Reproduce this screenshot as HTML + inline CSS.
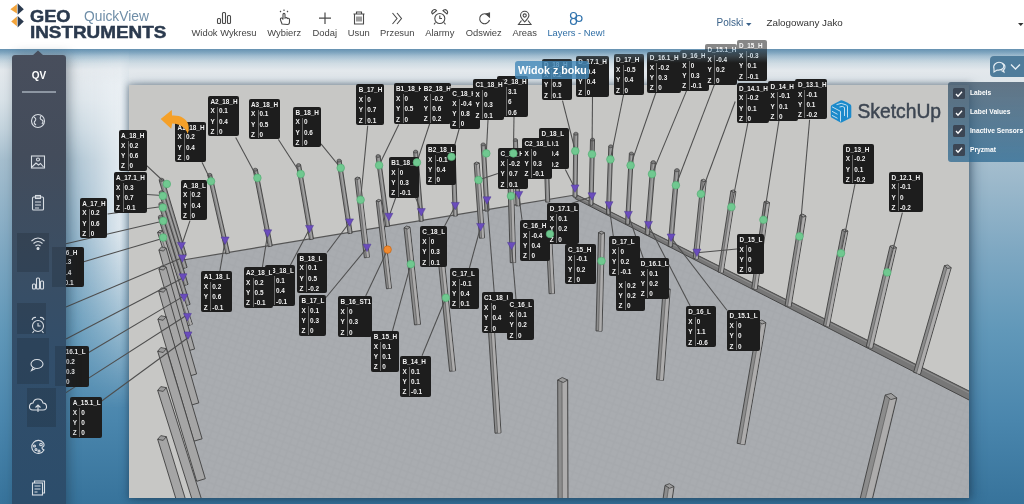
<!DOCTYPE html><html><head><meta charset="utf-8"><style>
*{margin:0;padding:0;box-sizing:border-box}
html,body{width:1024px;height:504px;overflow:hidden;background:#fff;font-family:"Liberation Sans",sans-serif}
#bg{position:absolute;left:0;top:49px;width:1024px;height:455px;background:linear-gradient(180deg,#7aa0bb 0px,#c5d5df 11px,#e3e8ec 21px,#d9e2e8 50px,#c3d3dd 80px,#a5bece 111px,#7fa8c2 201px,#6198b9 281px,#4a86ad 371px,#37739b 455px)}
#vp{position:absolute;left:129px;top:85px;width:840px;height:413px;background:#c7c7c5;overflow:hidden;box-shadow:0 0 6px 1px rgba(30,50,70,.4),4px 2px 12px rgba(20,45,70,.35)}
#glow{position:absolute;left:66px;top:49px;width:63px;height:360px;background:linear-gradient(90deg,rgba(236,241,245,0) 0%,rgba(236,241,245,.45) 45%,rgba(236,241,245,.85) 85%,rgba(215,225,232,.7) 100%);-webkit-mask-image:linear-gradient(180deg,transparent 0%,#000 10%,#000 50%,transparent 100%)}
#scene{position:absolute;left:0;top:0}
.lb{position:absolute;height:40.8px;background:#1d1d1d;border-radius:2px;color:#f0f0f0;font-size:6.4px;font-weight:bold;line-height:8px;white-space:nowrap;overflow:hidden}
.lb::after{content:"";position:absolute;left:9px;top:11px;bottom:1px;width:1px;background:#6a6a6a}
.lb b{position:absolute;left:2.5px;top:2px}
.lb i{position:absolute;font-style:normal}
.lb .k{left:2.5px}
.lb .v{left:11px}
#hdr{position:absolute;left:0;top:0;width:1024px;height:49px;background:#fff}
.nav{position:absolute;top:26.5px;font-size:9.4px;color:#444;white-space:nowrap}
#side{position:absolute;left:12px;top:55px;width:54px;height:460px;border-radius:3px;box-shadow:3px 0 12px rgba(25,40,55,.4);
 background:linear-gradient(180deg,#484e5c 0px,#434c5b 100px,#3b4e63 200px,#324e6a 300px,#2c4d6b 449px)}
</style></head><body><div id="root" style="position:absolute;left:0;top:0;width:1024px;height:504px;overflow:hidden;will-change:transform">
<div id="hdr">
 <div style="position:absolute;left:30px;font-weight:bold;font-size:16px;color:#2b3a4e;transform:scaleX(1.14);top:7.5px;-webkit-text-stroke:0.5px #2b3a4e;transform-origin:0 0">GEO</div>
 <div style="position:absolute;left:30px;top:22.5px;font-weight:bold;font-size:17px;color:#2b3a4e;transform:scaleX(1.11);-webkit-text-stroke:0.5px #2b3a4e;transform-origin:0 0">INSTRUMENTS</div>
 <div style="position:absolute;left:84px;top:8.5px;font-size:13.8px;color:#6f8ea8">QuickView</div>
 <svg width="30" height="30" style="position:absolute;left:0;top:0">
<polygon points="10.4,9.2 16.9,4.2 16.9,13.6" fill="#f3a43b"/><polygon points="17.6,3.3 23.8,9.2 17.6,14.8" fill="#2b3a4e"/>
<polygon points="11.2,21.4 16.9,16.6 16.9,26.2" fill="#f3a43b"/><polygon points="17.6,16 23.8,21.4 17.6,27.4" fill="#2b3a4e"/>
</svg><div class="nav" style="left:164px;width:120px;text-align:center;color:#444">Widok Wykresu</div><div class="nav" style="left:224.2px;width:120px;text-align:center;color:#444">Wybierz</div><div class="nav" style="left:264.8px;width:120px;text-align:center;color:#444">Dodaj</div><div class="nav" style="left:298.8px;width:120px;text-align:center;color:#444">Usun</div><div class="nav" style="left:337.3px;width:120px;text-align:center;color:#444">Przesun</div><div class="nav" style="left:379.8px;width:120px;text-align:center;color:#444">Alarmy</div><div class="nav" style="left:423.7px;width:120px;text-align:center;color:#444">Odswiez</div><div class="nav" style="left:464.70000000000005px;width:120px;text-align:center;color:#444">Areas</div><div class="nav" style="left:516.3px;width:120px;text-align:center;color:#2f6ea5">Layers - New!</div><svg width="1024" height="49" style="position:absolute;left:0;top:0">
<g fill="none" stroke="#4a4a4a" stroke-width="1.1">
 <rect x="217.5" y="18.5" width="3" height="5" rx="1"/><rect x="222.5" y="12.5" width="3" height="11" rx="1"/><rect x="227.5" y="15.5" width="3" height="8" rx="1"/>
 <path d="M282,24 C281,21 280,20 280.5,18.5 C281,17.5 282.5,18 283,19.5 L283,14.5 C283,13 285,13 285,14.5 L285,18 C286,17.5 287,17.5 287.5,18.5 C288.5,18 289.5,18.5 289.5,19.5 L289.5,22 C289.5,23.5 288.5,24.5 287.5,24.5 Z"/>
 <path d="M281,12 l-1,-1 M284,11 l0,-1.5 M287,12 l1,-1" />
 <path d="M325,12.5 V24 M319,18.2 H331" stroke-width="1.2"/>
 <path d="M353.5,14 H364.5 M356.5,14 V12 H361.5 V14 M354.5,14 V24 H363.5 V14 M357,16.5 V21.5 M359,16.5 V21.5 M361,16.5 V21.5"/>
 <path d="M392.5,13 L397,18.5 L392.5,24 M397,13 L401.5,18.5 L397,24"/>
 <circle cx="439.8" cy="18.5" r="5"/><path d="M439.8,15.5 V18.5 H442 M435.5,22.5 l-1.5,1.8 M444,22.5 l1.5,1.8"/>
 <path d="M432.5,14 A2.6,2.6 0 0,1 436.5,10.6 Z M447,14 A2.6,2.6 0 0,0 443,10.6 Z"/>
 <path d="M488.5,15.5 A5,5 0 1,0 489.5,20"/><path d="M486,14 L489.5,13 L489.5,17 Z" fill="#4a4a4a"/>
 <path d="M524.7,22 C521,18 520.5,16.5 520.5,15.5 A4.2,4.2 0 1,1 528.9,15.5 C528.9,16.5 528.4,18 524.7,22 Z"/><circle cx="524.7" cy="15.5" r="1.6"/>
 <path d="M521.5,20.5 L518.5,24.5 H531 L528,20.5"/>
</g>
<g fill="none" stroke="#2f72ad" stroke-width="1.2">
 <circle cx="573.5" cy="15.5" r="3"/><circle cx="579" cy="18.5" r="3"/><circle cx="573.5" cy="21.5" r="3"/>
</g>
</svg>
 <div style="position:absolute;left:716.5px;top:17.3px;font-size:10px;color:#3b6289">Polski</div>
 <svg width="8" height="5" style="position:absolute;left:745px;top:22px"><path d="M1,1 h5.5 l-2.75,3z" fill="#3b6289"/></svg>
 <div style="position:absolute;left:766.5px;top:17px;font-size:9.8px;color:#333">Zalogowany Jako</div>
 <svg width="8" height="5" style="position:absolute;left:1017px;top:22px"><path d="M1,1 h5.5 l-2.75,3z" fill="#333"/></svg>
</div>
<div id="bg"></div>
<div id="glow"></div><div id="vp"></div>
<svg id="scene" width="1024" height="504" style="position:absolute;left:0;top:0"><defs><clipPath id="vc"><rect x="129" y="85" width="840" height="413"/></clipPath><pattern id="tx" width="10" height="10" patternUnits="userSpaceOnUse" patternTransform="rotate(-25)"><rect width="10" height="10" fill="#a9acb0"/><path d="M0,0 L10,10 M10,0 L0,10" stroke="#a6a9ad" stroke-width="1.4"/></pattern></defs><g clip-path="url(#vc)"><polygon points="183,260 575,195 969,396 969,498 198,498 170,330" fill="url(#tx)"/><line x1="183" y1="260" x2="575" y2="195" stroke="#555" stroke-width="1.2"/><polygon points="207.8,175.2 225.8,253.9 229.6,253.1 211.6,174.4" fill="#888888" stroke="#3e3e3e" stroke-width="0.9"/><line x1="210.1" y1="174.7" x2="228.1" y2="253.4" stroke="#acacac" stroke-width="0.9"/><ellipse cx="209.7" cy="174.8" rx="2.0" ry="1.5" fill="#7a7a7a" stroke="#3e3e3e" stroke-width="0.6"/><polygon points="253.3,170.1 268.3,246.7 272.3,245.9 257.3,169.3" fill="#888888" stroke="#3e3e3e" stroke-width="0.9"/><line x1="255.7" y1="169.6" x2="270.7" y2="246.2" stroke="#acacac" stroke-width="0.9"/><ellipse cx="255.3" cy="169.7" rx="2.0" ry="1.5" fill="#7a7a7a" stroke="#3e3e3e" stroke-width="0.6"/><polygon points="296.6,165.3 309.5,239.6 313.5,239.0 300.6,164.7" fill="#888888" stroke="#3e3e3e" stroke-width="0.9"/><line x1="299.0" y1="164.9" x2="311.9" y2="239.2" stroke="#acacac" stroke-width="0.9"/><ellipse cx="298.6" cy="165.0" rx="2.0" ry="1.5" fill="#7a7a7a" stroke="#3e3e3e" stroke-width="0.6"/><polygon points="337.1,160.9 348.2,233.7 352.2,233.1 341.1,160.3" fill="#888888" stroke="#3e3e3e" stroke-width="0.9"/><line x1="339.5" y1="160.5" x2="350.6" y2="233.3" stroke="#acacac" stroke-width="0.9"/><ellipse cx="339.1" cy="160.6" rx="2.0" ry="1.5" fill="#7a7a7a" stroke="#3e3e3e" stroke-width="0.6"/><polygon points="376.1,156.3 385.6,226.7 389.6,226.1 380.1,155.7" fill="#888888" stroke="#3e3e3e" stroke-width="0.9"/><line x1="378.5" y1="155.9" x2="388.0" y2="226.3" stroke="#acacac" stroke-width="0.9"/><ellipse cx="378.1" cy="156.0" rx="2.0" ry="1.5" fill="#7a7a7a" stroke="#3e3e3e" stroke-width="0.6"/><polygon points="413.6,151.8 419.3,221.4 423.3,221.0 417.6,151.4" fill="#888888" stroke="#3e3e3e" stroke-width="0.9"/><line x1="416.0" y1="151.6" x2="421.7" y2="221.2" stroke="#acacac" stroke-width="0.9"/><ellipse cx="415.6" cy="151.6" rx="2.0" ry="1.5" fill="#7a7a7a" stroke="#3e3e3e" stroke-width="0.6"/><polygon points="451.0,150.1 453.3,216.1 457.3,215.9 455.0,149.9" fill="#888888" stroke="#3e3e3e" stroke-width="0.9"/><line x1="453.4" y1="150.0" x2="455.7" y2="216.0" stroke="#acacac" stroke-width="0.9"/><ellipse cx="453.0" cy="150.0" rx="2.0" ry="1.5" fill="#7a7a7a" stroke="#3e3e3e" stroke-width="0.6"/><polygon points="481.2,144.5 485.0,211.1 489.0,210.9 485.2,144.3" fill="#888888" stroke="#3e3e3e" stroke-width="0.9"/><line x1="483.6" y1="144.4" x2="487.4" y2="211.0" stroke="#acacac" stroke-width="0.9"/><ellipse cx="483.2" cy="144.4" rx="2.0" ry="1.5" fill="#7a7a7a" stroke="#3e3e3e" stroke-width="0.6"/><polygon points="513.4,140.1 516.0,205.9 520.0,205.7 517.4,139.9" fill="#888888" stroke="#3e3e3e" stroke-width="0.9"/><line x1="515.8" y1="140.0" x2="518.4" y2="205.8" stroke="#acacac" stroke-width="0.9"/><ellipse cx="515.4" cy="140.0" rx="2.0" ry="1.5" fill="#7a7a7a" stroke="#3e3e3e" stroke-width="0.6"/><polygon points="544.4,160.1 545.7,202.1 549.7,201.9 548.4,159.9" fill="#888888" stroke="#3e3e3e" stroke-width="0.9"/><line x1="546.8" y1="160.0" x2="548.1" y2="202.0" stroke="#acacac" stroke-width="0.9"/><ellipse cx="546.4" cy="160.0" rx="2.0" ry="1.5" fill="#7a7a7a" stroke="#3e3e3e" stroke-width="0.6"/><polygon points="575,194 972,392.5 972,401.5 575,198.5" fill="#777777" stroke="#454545" stroke-width="1"/><line x1="575" y1="195.5" x2="972" y2="394.5" stroke="#8e8e8e" stroke-width="1"/><polygon points="573.9,133.7 573.0,197.0 577.0,197.0 577.9,133.7" fill="#888888" stroke="#3e3e3e" stroke-width="0.9"/><line x1="576.3" y1="133.7" x2="575.4" y2="197.0" stroke="#acacac" stroke-width="0.9"/><ellipse cx="575.9" cy="133.7" rx="2.0" ry="1.5" fill="#7a7a7a" stroke="#3e3e3e" stroke-width="0.6"/><polygon points="590.5,139.6 589.0,205.0 593.0,205.0 594.5,139.6" fill="#888888" stroke="#3e3e3e" stroke-width="0.9"/><line x1="592.9" y1="139.6" x2="591.4" y2="205.0" stroke="#acacac" stroke-width="0.9"/><ellipse cx="592.5" cy="139.6" rx="2.0" ry="1.5" fill="#7a7a7a" stroke="#3e3e3e" stroke-width="0.6"/><polygon points="608.8,146.2 606.4,214.1 610.4,214.3 612.8,146.4" fill="#888888" stroke="#3e3e3e" stroke-width="0.9"/><line x1="611.2" y1="146.3" x2="608.8" y2="214.2" stroke="#acacac" stroke-width="0.9"/><ellipse cx="610.8" cy="146.3" rx="2.0" ry="1.5" fill="#7a7a7a" stroke="#3e3e3e" stroke-width="0.6"/><polygon points="629.4,153.4 625.5,224.0 629.5,224.2 633.4,153.6" fill="#888888" stroke="#3e3e3e" stroke-width="0.9"/><line x1="631.8" y1="153.5" x2="627.9" y2="224.1" stroke="#acacac" stroke-width="0.9"/><ellipse cx="631.4" cy="153.5" rx="2.0" ry="1.5" fill="#7a7a7a" stroke="#3e3e3e" stroke-width="0.6"/><polygon points="651.1,162.0 645.1,234.6 649.5,235.0 655.5,162.4" fill="#888888" stroke="#3e3e3e" stroke-width="0.9"/><line x1="653.7" y1="162.2" x2="647.7" y2="234.8" stroke="#acacac" stroke-width="0.9"/><ellipse cx="653.3" cy="162.2" rx="2.2" ry="1.6" fill="#7a7a7a" stroke="#3e3e3e" stroke-width="0.6"/><polygon points="674.8,170.0 668.1,246.5 672.5,246.9 679.2,170.4" fill="#888888" stroke="#3e3e3e" stroke-width="0.9"/><line x1="677.4" y1="170.2" x2="670.7" y2="246.7" stroke="#acacac" stroke-width="0.9"/><ellipse cx="677.0" cy="170.2" rx="2.2" ry="1.6" fill="#7a7a7a" stroke="#3e3e3e" stroke-width="0.6"/><polygon points="701.2,180.2 693.2,258.4 698.2,259.0 706.2,180.8" fill="#8c8c8c" stroke="#3e3e3e" stroke-width="0.9"/><polygon points="703.3,180.5 695.3,258.7 697.8,258.9 705.8,180.7" fill="#adacac"/><line x1="703.3" y1="180.5" x2="695.3" y2="258.7" stroke="#5a5a5a" stroke-width="0.7"/><polygon points="701.2,180.2 703.6,179.2 706.2,180.8 703.8,181.8" fill="#9c9c9c" stroke="#3e3e3e" stroke-width="0.8"/><polygon points="730.9,190.8 718.2,272.1 723.2,272.9 735.9,191.6" fill="#8c8c8c" stroke="#3e3e3e" stroke-width="0.9"/><polygon points="733.0,191.1 720.3,272.4 722.8,272.8 735.5,191.5" fill="#adacac"/><line x1="733.0" y1="191.1" x2="720.3" y2="272.4" stroke="#5a5a5a" stroke-width="0.7"/><polygon points="730.9,190.8 733.3,189.9 735.9,191.6 733.5,192.5" fill="#9c9c9c" stroke="#3e3e3e" stroke-width="0.8"/><polygon points="764.1,201.8 751.7,288.6 757.1,289.4 769.5,202.6" fill="#8c8c8c" stroke="#3e3e3e" stroke-width="0.9"/><polygon points="766.4,202.1 754.0,288.9 756.7,289.3 769.1,202.5" fill="#adacac"/><line x1="766.4" y1="202.1" x2="754.0" y2="288.9" stroke="#5a5a5a" stroke-width="0.7"/><polygon points="764.1,201.8 766.7,200.8 769.5,202.6 766.9,203.6" fill="#9c9c9c" stroke="#3e3e3e" stroke-width="0.8"/><polygon points="800.0,215.1 785.0,305.9 791.0,306.9 806.0,216.1" fill="#8c8c8c" stroke="#3e3e3e" stroke-width="0.9"/><polygon points="802.6,215.5 787.6,306.3 790.5,306.8 805.5,216.0" fill="#adacac"/><line x1="802.6" y1="215.5" x2="787.6" y2="306.3" stroke="#5a5a5a" stroke-width="0.7"/><polygon points="800.0,215.1 802.9,214.1 806.0,216.1 803.1,217.1" fill="#9c9c9c" stroke="#3e3e3e" stroke-width="0.8"/><polygon points="842.1,229.9 823.4,325.6 829.2,326.8 847.9,231.1" fill="#8c8c8c" stroke="#3e3e3e" stroke-width="0.9"/><polygon points="844.6,230.4 825.9,326.1 828.8,326.7 847.5,231.0" fill="#adacac"/><line x1="844.6" y1="230.4" x2="825.9" y2="326.1" stroke="#5a5a5a" stroke-width="0.7"/><polygon points="842.1,229.9 845.0,229.0 847.9,231.1 845.0,232.0" fill="#9c9c9c" stroke="#3e3e3e" stroke-width="0.8"/><polygon points="890.0,246.2 866.2,346.8 872.6,348.2 896.4,247.6" fill="#8c8c8c" stroke="#3e3e3e" stroke-width="0.9"/><polygon points="892.7,246.8 868.9,347.4 872.1,348.1 895.9,247.5" fill="#adacac"/><line x1="892.7" y1="246.8" x2="868.9" y2="347.4" stroke="#5a5a5a" stroke-width="0.7"/><polygon points="890.0,246.2 893.3,245.2 896.4,247.6 893.1,248.6" fill="#9c9c9c" stroke="#3e3e3e" stroke-width="0.8"/><polygon points="944.4,265.7 913.6,372.3 920.4,374.3 951.2,267.7" fill="#8c8c8c" stroke="#3e3e3e" stroke-width="0.9"/><polygon points="947.3,266.6 916.5,373.2 919.9,374.1 950.7,267.5" fill="#adacac"/><line x1="947.3" y1="266.6" x2="916.5" y2="373.2" stroke="#5a5a5a" stroke-width="0.7"/><polygon points="944.4,265.7 947.9,264.9 951.2,267.7 947.7,268.5" fill="#9c9c9c" stroke="#3e3e3e" stroke-width="0.8"/><polygon points="159.2,180.4 181.8,255.6 186.2,254.4 163.6,179.2" fill="#888888" stroke="#3e3e3e" stroke-width="0.9"/><line x1="161.8" y1="179.7" x2="184.4" y2="254.9" stroke="#acacac" stroke-width="0.9"/><ellipse cx="161.4" cy="179.8" rx="2.2" ry="1.6" fill="#7a7a7a" stroke="#3e3e3e" stroke-width="0.6"/><polygon points="159.3,193.0 182.9,268.7 187.1,267.3 163.5,191.6" fill="#888888" stroke="#3e3e3e" stroke-width="0.9"/><line x1="161.8" y1="192.2" x2="185.4" y2="267.9" stroke="#acacac" stroke-width="0.9"/><ellipse cx="161.4" cy="192.3" rx="2.2" ry="1.6" fill="#7a7a7a" stroke="#3e3e3e" stroke-width="0.6"/><polygon points="158.9,204.7 183.9,285.7 188.1,284.3 163.1,203.3" fill="#888888" stroke="#3e3e3e" stroke-width="0.9"/><line x1="161.4" y1="203.9" x2="186.4" y2="284.9" stroke="#acacac" stroke-width="0.9"/><ellipse cx="161.0" cy="204.0" rx="2.2" ry="1.6" fill="#7a7a7a" stroke="#3e3e3e" stroke-width="0.6"/><polygon points="158.4,217.5 185.9,305.7 190.1,304.3 162.6,216.1" fill="#888888" stroke="#3e3e3e" stroke-width="0.9"/><line x1="160.9" y1="216.7" x2="188.4" y2="304.9" stroke="#acacac" stroke-width="0.9"/><ellipse cx="160.5" cy="216.8" rx="2.2" ry="1.6" fill="#7a7a7a" stroke="#3e3e3e" stroke-width="0.6"/><polygon points="157.6,232.4 187.6,325.8 192.4,324.2 162.4,230.8" fill="#a5a5a5" stroke="#3e3e3e" stroke-width="0.9"/><polygon points="159.6,231.7 189.6,325.1 192.0,324.4 162.0,231.0" fill="#adacac"/><line x1="159.6" y1="231.7" x2="189.6" y2="325.1" stroke="#5a5a5a" stroke-width="0.7"/><polygon points="157.6,232.4 159.4,230.5 162.4,230.8 160.6,232.7" fill="#9c9c9c" stroke="#3e3e3e" stroke-width="0.8"/><polygon points="158.9,250.0 187.4,351.0 194.6,349.0 166.1,248.0" fill="#a5a5a5" stroke="#3e3e3e" stroke-width="0.9"/><polygon points="158.9,250.0 161.5,246.9 166.1,248.0 163.5,251.1" fill="#9a9a9a" stroke="#3e3e3e" stroke-width="0.8"/><polygon points="158.9,269.0 189.4,376.0 196.6,374.0 166.1,267.0" fill="#a5a5a5" stroke="#3e3e3e" stroke-width="0.9"/><polygon points="158.9,269.0 161.5,265.9 166.1,267.0 163.5,270.1" fill="#9a9a9a" stroke="#3e3e3e" stroke-width="0.8"/><polygon points="158.7,291.1 191.2,405.1 198.8,402.9 166.3,288.9" fill="#a5a5a5" stroke="#3e3e3e" stroke-width="0.9"/><polygon points="158.7,291.1 161.5,287.8 166.3,288.9 163.5,292.2" fill="#9a9a9a" stroke="#3e3e3e" stroke-width="0.8"/><polygon points="157.9,319.2 193.9,441.2 202.1,438.8 166.1,316.8" fill="#a5a5a5" stroke="#3e3e3e" stroke-width="0.9"/><polygon points="157.9,319.2 160.9,315.7 166.1,316.8 163.1,320.3" fill="#9a9a9a" stroke="#3e3e3e" stroke-width="0.8"/><polygon points="157.7,351.3 196.7,481.3 205.3,478.7 166.3,348.7" fill="#a5a5a5" stroke="#3e3e3e" stroke-width="0.9"/><polygon points="157.7,351.3 160.8,347.5 166.3,348.7 163.2,352.5" fill="#9a9a9a" stroke="#3e3e3e" stroke-width="0.8"/><polygon points="157.7,390.4 192.7,501.4 201.3,498.6 166.3,387.6" fill="#a5a5a5" stroke="#3e3e3e" stroke-width="0.9"/><polygon points="157.7,390.4 160.8,386.6 166.3,387.6 163.2,391.4" fill="#9a9a9a" stroke="#3e3e3e" stroke-width="0.8"/><polygon points="157.7,439.3 176.7,501.3 185.3,498.7 166.3,436.7" fill="#a5a5a5" stroke="#3e3e3e" stroke-width="0.9"/><polygon points="157.7,439.3 160.8,435.6 166.3,436.7 163.2,440.4" fill="#9a9a9a" stroke="#3e3e3e" stroke-width="0.8"/><polygon points="355.0,178.5 364.4,257.8 369.4,257.2 360.0,177.9" fill="#8c8c8c" stroke="#3e3e3e" stroke-width="0.9"/><polygon points="357.1,178.2 366.5,257.5 369.0,257.2 359.6,177.9" fill="#adacac"/><line x1="357.1" y1="178.2" x2="366.5" y2="257.5" stroke="#5a5a5a" stroke-width="0.7"/><polygon points="355.0,178.5 357.1,177.0 360.0,177.9 357.9,179.4" fill="#9c9c9c" stroke="#3e3e3e" stroke-width="0.8"/><polygon points="376.2,200.9 386.5,288.8 391.5,288.2 381.2,200.3" fill="#8c8c8c" stroke="#3e3e3e" stroke-width="0.9"/><polygon points="378.3,200.6 388.6,288.5 391.1,288.3 380.8,200.4" fill="#adacac"/><line x1="378.3" y1="200.6" x2="388.6" y2="288.5" stroke="#5a5a5a" stroke-width="0.7"/><polygon points="376.2,200.9 378.3,199.4 381.2,200.3 379.1,201.8" fill="#9c9c9c" stroke="#3e3e3e" stroke-width="0.8"/><polygon points="404.0,227.8 414.5,324.9 420.5,324.3 410.0,227.2" fill="#8c8c8c" stroke="#3e3e3e" stroke-width="0.9"/><polygon points="406.6,227.5 417.1,324.6 420.0,324.3 409.5,227.2" fill="#adacac"/><line x1="406.6" y1="227.5" x2="417.1" y2="324.6" stroke="#5a5a5a" stroke-width="0.7"/><polygon points="404.0,227.8 406.5,226.0 410.0,227.2 407.5,229.0" fill="#9c9c9c" stroke="#3e3e3e" stroke-width="0.8"/><polygon points="438.8,265.3 449.6,371.3 455.6,370.7 444.8,264.7" fill="#8c8c8c" stroke="#3e3e3e" stroke-width="0.9"/><polygon points="441.4,265.0 452.2,371.0 455.1,370.7 444.3,264.7" fill="#adacac"/><line x1="441.4" y1="265.0" x2="452.2" y2="371.0" stroke="#5a5a5a" stroke-width="0.7"/><polygon points="438.8,265.3 441.3,263.5 444.8,264.7 442.3,266.5" fill="#9c9c9c" stroke="#3e3e3e" stroke-width="0.8"/><polygon points="474.2,163.4 479.5,238.2 484.5,237.8 479.2,163.0" fill="#8c8c8c" stroke="#3e3e3e" stroke-width="0.9"/><polygon points="476.3,163.2 481.6,238.0 484.1,237.8 478.8,163.0" fill="#adacac"/><line x1="476.3" y1="163.2" x2="481.6" y2="238.0" stroke="#5a5a5a" stroke-width="0.7"/><polygon points="474.2,163.4 476.4,162.0 479.2,163.0 477.0,164.4" fill="#9c9c9c" stroke="#3e3e3e" stroke-width="0.8"/><polygon points="486.5,300.2 495.0,433.2 501.0,432.8 492.5,299.8" fill="#8c8c8c" stroke="#3e3e3e" stroke-width="0.9"/><polygon points="489.1,300.0 497.6,433.0 500.5,432.8 492.0,299.8" fill="#adacac"/><line x1="489.1" y1="300.0" x2="497.6" y2="433.0" stroke="#5a5a5a" stroke-width="0.7"/><polygon points="486.5,300.2 489.1,298.5 492.5,299.8 489.9,301.5" fill="#9c9c9c" stroke="#3e3e3e" stroke-width="0.8"/><polygon points="507.8,175.1 510.3,262.7 515.7,262.5 513.2,174.9" fill="#8c8c8c" stroke="#3e3e3e" stroke-width="0.9"/><polygon points="510.1,175.0 512.6,262.6 515.3,262.5 512.8,174.9" fill="#adacac"/><line x1="510.1" y1="175.0" x2="512.6" y2="262.6" stroke="#5a5a5a" stroke-width="0.7"/><polygon points="507.8,175.1 510.2,173.6 513.2,174.9 510.8,176.4" fill="#9c9c9c" stroke="#3e3e3e" stroke-width="0.8"/><polygon points="546.3,236.9 549.1,293.7 554.5,293.5 551.7,236.7" fill="#8c8c8c" stroke="#3e3e3e" stroke-width="0.9"/><polygon points="548.6,236.8 551.4,293.6 554.1,293.5 551.3,236.7" fill="#adacac"/><line x1="548.6" y1="236.8" x2="551.4" y2="293.6" stroke="#5a5a5a" stroke-width="0.7"/><polygon points="546.3,236.9 548.7,235.4 551.7,236.7 549.3,238.2" fill="#9c9c9c" stroke="#3e3e3e" stroke-width="0.8"/><polygon points="598.5,232.6 596.0,330.9 602.0,331.1 604.5,232.8" fill="#8c8c8c" stroke="#3e3e3e" stroke-width="0.9"/><polygon points="601.1,232.7 598.6,331.0 601.5,331.1 604.0,232.8" fill="#adacac"/><line x1="601.1" y1="232.7" x2="598.6" y2="331.0" stroke="#5a5a5a" stroke-width="0.7"/><polygon points="598.5,232.6 601.2,231.2 604.5,232.8 601.8,234.2" fill="#9c9c9c" stroke="#3e3e3e" stroke-width="0.8"/><polygon points="557.7,380.0 558.0,500.0 568.0,500.0 567.7,380.0" fill="#8c8c8c" stroke="#3e3e3e" stroke-width="0.9"/><polygon points="562.0,380.0 562.3,500.0 567.2,500.0 566.9,380.0" fill="#adacac"/><line x1="562.0" y1="380.0" x2="562.3" y2="500.0" stroke="#5a5a5a" stroke-width="0.7"/><polygon points="557.7,380.0 562.2,377.5 567.7,380.0 563.2,382.5" fill="#9c9c9c" stroke="#3e3e3e" stroke-width="0.8"/><polygon points="663.2,288.7 656.5,379.7 663.5,380.3 670.2,289.3" fill="#8c8c8c" stroke="#3e3e3e" stroke-width="0.9"/><polygon points="666.2,289.0 659.5,380.0 663.0,380.2 669.7,289.2" fill="#adacac"/><line x1="666.2" y1="289.0" x2="659.5" y2="380.0" stroke="#5a5a5a" stroke-width="0.7"/><polygon points="663.2,288.7 666.5,287.2 670.2,289.3 666.9,290.8" fill="#9c9c9c" stroke="#3e3e3e" stroke-width="0.8"/><polygon points="758.1,321.3 737.1,443.3 744.9,444.7 765.9,322.7" fill="#8c8c8c" stroke="#3e3e3e" stroke-width="0.9"/><polygon points="761.4,321.9 740.4,443.9 744.4,444.6 765.4,322.6" fill="#adacac"/><line x1="761.4" y1="321.9" x2="740.4" y2="443.9" stroke="#5a5a5a" stroke-width="0.7"/><polygon points="758.1,321.3 761.9,320.0 765.9,322.7 762.1,324.0" fill="#9c9c9c" stroke="#3e3e3e" stroke-width="0.8"/><polygon points="885.2,395.1 860.2,498.6 871.8,501.4 896.8,397.9" fill="#8c8c8c" stroke="#3e3e3e" stroke-width="0.9"/><polygon points="890.1,396.3 865.1,499.8 871.0,501.2 896.0,397.7" fill="#adacac"/><line x1="890.1" y1="396.3" x2="865.1" y2="499.8" stroke="#5a5a5a" stroke-width="0.7"/><polygon points="885.2,395.1 891.1,393.4 896.8,397.9 890.9,399.6" fill="#9c9c9c" stroke="#3e3e3e" stroke-width="0.8"/><polygon points="665.0,485.4 663.0,499.4 672.0,500.6 674.0,486.6" fill="#8c8c8c" stroke="#3e3e3e" stroke-width="0.9"/><polygon points="668.8,485.9 666.8,499.9 671.3,500.5 673.3,486.5" fill="#adacac"/><line x1="668.8" y1="485.9" x2="666.8" y2="499.9" stroke="#5a5a5a" stroke-width="0.7"/><polygon points="665.0,485.4 669.4,483.7 674.0,486.6 669.6,488.3" fill="#9c9c9c" stroke="#3e3e3e" stroke-width="0.8"/></g><line x1="144.3" y1="163.3" x2="162.1" y2="180" stroke="#4e4e4e" stroke-width="1.05"/><line x1="147" y1="194.4" x2="162" y2="195.4" stroke="#4e4e4e" stroke-width="1.05"/><line x1="107.6" y1="214" x2="160.5" y2="206.8" stroke="#4e4e4e" stroke-width="1.05"/><line x1="66" y1="243.8" x2="162.4" y2="221.2" stroke="#4e4e4e" stroke-width="1.05"/><line x1="83.8" y1="261.7" x2="164" y2="237.9" stroke="#4e4e4e" stroke-width="1.05"/><line x1="66" y1="307" x2="182.2" y2="257.7" stroke="#4e4e4e" stroke-width="1.05"/><line x1="66" y1="339" x2="183.8" y2="277.5" stroke="#4e4e4e" stroke-width="1.05"/><line x1="87.8" y1="353" x2="185" y2="295.4" stroke="#4e4e4e" stroke-width="1.05"/><line x1="66" y1="392.6" x2="187" y2="315" stroke="#4e4e4e" stroke-width="1.05"/><line x1="99.7" y1="402.5" x2="189" y2="337" stroke="#4e4e4e" stroke-width="1.05"/><line x1="202" y1="162.3" x2="211" y2="181" stroke="#4e4e4e" stroke-width="1.05"/><line x1="235.7" y1="137.5" x2="257.4" y2="178" stroke="#4e4e4e" stroke-width="1.05"/><line x1="278.4" y1="139.5" x2="300.7" y2="174" stroke="#4e4e4e" stroke-width="1.05"/><line x1="321" y1="143.9" x2="340.7" y2="168" stroke="#4e4e4e" stroke-width="1.05"/><line x1="367.7" y1="125.6" x2="360.6" y2="199.8" stroke="#4e4e4e" stroke-width="1.05"/><line x1="398.8" y1="124.5" x2="379.1" y2="165.3" stroke="#4e4e4e" stroke-width="1.05"/><line x1="429.6" y1="124" x2="416.9" y2="162.4" stroke="#4e4e4e" stroke-width="1.05"/><line x1="459.4" y1="128" x2="451.5" y2="156.8" stroke="#4e4e4e" stroke-width="1.05"/><line x1="488" y1="120" x2="486.3" y2="153.4" stroke="#4e4e4e" stroke-width="1.05"/><line x1="514" y1="116.5" x2="513.4" y2="153.4" stroke="#4e4e4e" stroke-width="1.05"/><line x1="562.5" y1="100.7" x2="575.3" y2="151" stroke="#4e4e4e" stroke-width="1.05"/><line x1="592.5" y1="97" x2="592" y2="154.2" stroke="#4e4e4e" stroke-width="1.05"/><line x1="623.5" y1="95" x2="610.4" y2="159.4" stroke="#4e4e4e" stroke-width="1.05"/><line x1="655.9" y1="92.5" x2="630.6" y2="165.4" stroke="#4e4e4e" stroke-width="1.05"/><line x1="686.6" y1="90.6" x2="652" y2="174.1" stroke="#4e4e4e" stroke-width="1.05"/><line x1="714.4" y1="84.6" x2="675.9" y2="185.2" stroke="#4e4e4e" stroke-width="1.05"/><line x1="735.2" y1="101.5" x2="700.9" y2="194" stroke="#4e4e4e" stroke-width="1.05"/><line x1="748" y1="122.3" x2="731.4" y2="207" stroke="#4e4e4e" stroke-width="1.05"/><line x1="779" y1="120.3" x2="763.4" y2="219.8" stroke="#4e4e4e" stroke-width="1.05"/><line x1="809.6" y1="119.7" x2="799.5" y2="236.4" stroke="#4e4e4e" stroke-width="1.05"/><line x1="855" y1="184" x2="841" y2="253.2" stroke="#4e4e4e" stroke-width="1.05"/><line x1="902.4" y1="212.7" x2="887.2" y2="272.4" stroke="#4e4e4e" stroke-width="1.05"/><line x1="190" y1="220.7" x2="181.4" y2="246" stroke="#4e4e4e" stroke-width="1.05"/><line x1="219.8" y1="271.3" x2="225.1" y2="240.6" stroke="#4e4e4e" stroke-width="1.05"/><line x1="262.4" y1="267.2" x2="267.7" y2="233.4" stroke="#4e4e4e" stroke-width="1.05"/><line x1="290.2" y1="265.4" x2="309.5" y2="229" stroke="#4e4e4e" stroke-width="1.05"/><line x1="327" y1="252.5" x2="349.5" y2="222.5" stroke="#4e4e4e" stroke-width="1.05"/><line x1="326" y1="297.5" x2="367" y2="247.8" stroke="#4e4e4e" stroke-width="1.05"/><line x1="365.7" y1="296" x2="386.5" y2="252" stroke="#4e4e4e" stroke-width="1.05"/><line x1="395.8" y1="197.5" x2="388.9" y2="216.9" stroke="#4e4e4e" stroke-width="1.05"/><line x1="410.7" y1="184.6" x2="421.3" y2="212.2" stroke="#4e4e4e" stroke-width="1.05"/><line x1="392.4" y1="331.2" x2="410.8" y2="264.2" stroke="#4e4e4e" stroke-width="1.05"/><line x1="422" y1="355.8" x2="445.9" y2="297.8" stroke="#4e4e4e" stroke-width="1.05"/><line x1="444.6" y1="226" x2="455.3" y2="206" stroke="#4e4e4e" stroke-width="1.05"/><line x1="469.4" y1="268" x2="480.6" y2="227" stroke="#4e4e4e" stroke-width="1.05"/><line x1="494.2" y1="292.3" x2="487" y2="200.4" stroke="#4e4e4e" stroke-width="1.05"/><line x1="522" y1="219.8" x2="518.8" y2="195" stroke="#4e4e4e" stroke-width="1.05"/><line x1="497.9" y1="173.6" x2="478.5" y2="180" stroke="#4e4e4e" stroke-width="1.05"/><line x1="565.3" y1="169.6" x2="575" y2="188.5" stroke="#4e4e4e" stroke-width="1.05"/><line x1="739.4" y1="248.7" x2="696.9" y2="252.7" stroke="#4e4e4e" stroke-width="1.05"/><line x1="690.3" y1="306.3" x2="648.5" y2="225" stroke="#4e4e4e" stroke-width="1.05"/><line x1="727" y1="310.3" x2="671.1" y2="237.6" stroke="#4e4e4e" stroke-width="1.05"/><line x1="613.4" y1="236.7" x2="609" y2="205.3" stroke="#4e4e4e" stroke-width="1.05"/><line x1="643.2" y1="258" x2="628.4" y2="215" stroke="#4e4e4e" stroke-width="1.05"/><line x1="569.8" y1="204" x2="592" y2="196.4" stroke="#4e4e4e" stroke-width="1.05"/><line x1="568.8" y1="243.6" x2="549" y2="236" stroke="#4e4e4e" stroke-width="1.05"/><line x1="516" y1="299.3" x2="511.5" y2="246" stroke="#4e4e4e" stroke-width="1.05"/><polygon points="177.4,242.4 185.4,242.4 181.4,249.8" fill="#6a4cbc" stroke="#4e3a94" stroke-width="0.5"/><polygon points="178.4,254.9 186.4,254.9 182.4,262.3" fill="#6a4cbc" stroke="#4e3a94" stroke-width="0.5"/><polygon points="179.0,273.8 187.0,273.8 183.0,281.2" fill="#6a4cbc" stroke="#4e3a94" stroke-width="0.5"/><polygon points="180.0,294.1 188.0,294.1 184.0,301.5" fill="#6a4cbc" stroke="#4e3a94" stroke-width="0.5"/><polygon points="183.4,313.4 191.4,313.4 187.4,320.8" fill="#6a4cbc" stroke="#4e3a94" stroke-width="0.5"/><polygon points="184.0,331.9 192.0,331.9 188.0,339.3" fill="#6a4cbc" stroke="#4e3a94" stroke-width="0.5"/><polygon points="221.1,237.0 229.1,237.0 225.1,244.4" fill="#6a4cbc" stroke="#4e3a94" stroke-width="0.5"/><polygon points="263.7,229.8 271.7,229.8 267.7,237.2" fill="#6a4cbc" stroke="#4e3a94" stroke-width="0.5"/><polygon points="305.5,225.4 313.5,225.4 309.5,232.8" fill="#6a4cbc" stroke="#4e3a94" stroke-width="0.5"/><polygon points="345.5,218.9 353.5,218.9 349.5,226.3" fill="#6a4cbc" stroke="#4e3a94" stroke-width="0.5"/><polygon points="363.0,244.2 371.0,244.2 367.0,251.6" fill="#6a4cbc" stroke="#4e3a94" stroke-width="0.5"/><polygon points="384.9,213.3 392.9,213.3 388.9,220.7" fill="#6a4cbc" stroke="#4e3a94" stroke-width="0.5"/><polygon points="417.3,208.6 425.3,208.6 421.3,216.0" fill="#6a4cbc" stroke="#4e3a94" stroke-width="0.5"/><polygon points="451.3,202.4 459.3,202.4 455.3,209.8" fill="#6a4cbc" stroke="#4e3a94" stroke-width="0.5"/><polygon points="483.0,196.8 491.0,196.8 487.0,204.2" fill="#6a4cbc" stroke="#4e3a94" stroke-width="0.5"/><polygon points="476.6,223.4 484.6,223.4 480.6,230.8" fill="#6a4cbc" stroke="#4e3a94" stroke-width="0.5"/><polygon points="514.8,191.4 522.8,191.4 518.8,198.8" fill="#6a4cbc" stroke="#4e3a94" stroke-width="0.5"/><polygon points="507.5,242.4 515.5,242.4 511.5,249.8" fill="#6a4cbc" stroke="#4e3a94" stroke-width="0.5"/><polygon points="571.0,184.9 579.0,184.9 575.0,192.3" fill="#6a4cbc" stroke="#4e3a94" stroke-width="0.5"/><polygon points="588.0,192.8 596.0,192.8 592.0,200.2" fill="#6a4cbc" stroke="#4e3a94" stroke-width="0.5"/><polygon points="605.0,201.7 613.0,201.7 609.0,209.1" fill="#6a4cbc" stroke="#4e3a94" stroke-width="0.5"/><polygon points="624.4,211.4 632.4,211.4 628.4,218.8" fill="#6a4cbc" stroke="#4e3a94" stroke-width="0.5"/><polygon points="644.5,221.4 652.5,221.4 648.5,228.8" fill="#6a4cbc" stroke="#4e3a94" stroke-width="0.5"/><polygon points="667.1,234.0 675.1,234.0 671.1,241.4" fill="#6a4cbc" stroke="#4e3a94" stroke-width="0.5"/><polygon points="692.9,249.1 700.9,249.1 696.9,256.5" fill="#6a4cbc" stroke="#4e3a94" stroke-width="0.5"/></svg>
<svg width="30" height="30" style="position:absolute;left:826px;top:96px">
<path d="M15,4.3 Q17,4.3 24.5,8.5 Q25.3,9 25.3,10.5 L25.3,20.5 Q25.3,21.5 24.5,22 L16,26.3 Q15,26.8 14,26.3 L5.5,21.5 Q4.8,21 4.8,20 L4.8,10.8 Q4.8,9.8 5.5,9.3 Z" fill="#1b8acb"/>
<g fill="none" stroke="#d5e8f4" stroke-width="0.9"><path d="M6,10.8 L14.5,15.3 L14.5,25.5 M6,15.3 L11.5,18.3 M6,19.4 L11.5,22.3 M10.5,8.6 Q15,6 20.5,9 Q21.5,9.5 21.5,11 L21.5,21.5 M13.5,11 Q16.5,9.5 18.5,11.5 L18.5,20"/></g>
</svg>
<div style="position:absolute;left:857.5px;top:101px;font-size:19.3px;color:#3d4652;-webkit-text-stroke:0.45px #3d4652;white-space:nowrap">SketchUp</div>
<div id="labels" style="position:absolute;left:0;top:0;width:1024px;height:504px;will-change:transform"><div class="lb" style="left:51.5px;top:246.5px;width:32.5px"><b class="t">A_16_H</b><i class="k" style="top:11.9px">X</i><i class="v" style="top:11.9px">0.3</i><i class="k" style="top:22.1px">Y</i><i class="v" style="top:22.1px">0.4</i><i class="k" style="top:32.3px">Z</i><i class="v" style="top:32.3px">-0.1</i></div><div class="lb" style="left:55.0px;top:346.0px;width:34.0px"><b class="t">A_16.1_L</b><i class="k" style="top:11.9px">X</i><i class="v" style="top:11.9px">0.2</i><i class="k" style="top:22.1px">Y</i><i class="v" style="top:22.1px">0.3</i><i class="k" style="top:32.3px">Z</i><i class="v" style="top:32.3px">0</i></div><div class="lb" style="left:70.2px;top:397.0px;width:31.5px"><b class="t">A_15.1_L</b><i class="k" style="top:11.9px">X</i><i class="v" style="top:11.9px">0</i><i class="k" style="top:22.1px">Y</i><i class="v" style="top:22.1px">0</i><i class="k" style="top:32.3px">Z</i><i class="v" style="top:32.3px">0</i></div><div class="lb" style="left:118.5px;top:130.0px;width:28.0px"><b class="t">A_18_H</b><i class="k" style="top:11.9px">X</i><i class="v" style="top:11.9px">0.2</i><i class="k" style="top:22.1px">Y</i><i class="v" style="top:22.1px">0.6</i><i class="k" style="top:32.3px">Z</i><i class="v" style="top:32.3px">0</i></div><div class="lb" style="left:113.6px;top:172.0px;width:33.4px"><b class="t">A_17.1_H</b><i class="k" style="top:11.9px">X</i><i class="v" style="top:11.9px">0.3</i><i class="k" style="top:22.1px">Y</i><i class="v" style="top:22.1px">0.7</i><i class="k" style="top:32.3px">Z</i><i class="v" style="top:32.3px">-0.1</i></div><div class="lb" style="left:79.7px;top:197.5px;width:27.3px"><b class="t">A_17_H</b><i class="k" style="top:11.9px">X</i><i class="v" style="top:11.9px">0.2</i><i class="k" style="top:22.1px">Y</i><i class="v" style="top:22.1px">0.6</i><i class="k" style="top:32.3px">Z</i><i class="v" style="top:32.3px">0</i></div><div class="lb" style="left:175.0px;top:121.5px;width:31.0px"><b class="t">A1_18_H</b><i class="k" style="top:11.9px">X</i><i class="v" style="top:11.9px">0.2</i><i class="k" style="top:22.1px">Y</i><i class="v" style="top:22.1px">0.4</i><i class="k" style="top:32.3px">Z</i><i class="v" style="top:32.3px">0</i></div><div class="lb" style="left:208.0px;top:95.5px;width:31.0px"><b class="t">A2_18_H</b><i class="k" style="top:11.9px">X</i><i class="v" style="top:11.9px">0.1</i><i class="k" style="top:22.1px">Y</i><i class="v" style="top:22.1px">0.4</i><i class="k" style="top:32.3px">Z</i><i class="v" style="top:32.3px">0</i></div><div class="lb" style="left:248.5px;top:98.5px;width:31.3px"><b class="t">A3_18_H</b><i class="k" style="top:11.9px">X</i><i class="v" style="top:11.9px">0.1</i><i class="k" style="top:22.1px">Y</i><i class="v" style="top:22.1px">0.5</i><i class="k" style="top:32.3px">Z</i><i class="v" style="top:32.3px">0</i></div><div class="lb" style="left:293.0px;top:106.5px;width:27.7px"><b class="t">B_18_H</b><i class="k" style="top:11.9px">X</i><i class="v" style="top:11.9px">0</i><i class="k" style="top:22.1px">Y</i><i class="v" style="top:22.1px">0.6</i><i class="k" style="top:32.3px">Z</i><i class="v" style="top:32.3px">0</i></div><div class="lb" style="left:356.3px;top:84.4px;width:27.8px"><b class="t">B_17_H</b><i class="k" style="top:11.9px">X</i><i class="v" style="top:11.9px">0</i><i class="k" style="top:22.1px">Y</i><i class="v" style="top:22.1px">0.7</i><i class="k" style="top:32.3px">Z</i><i class="v" style="top:32.3px">0.1</i></div><div class="lb" style="left:393.5px;top:83.4px;width:30.0px"><b class="t">B1_18_H</b><i class="k" style="top:11.9px">X</i><i class="v" style="top:11.9px">0</i><i class="k" style="top:22.1px">Y</i><i class="v" style="top:22.1px">0.5</i><i class="k" style="top:32.3px">Z</i><i class="v" style="top:32.3px">0</i></div><div class="lb" style="left:421.3px;top:82.8px;width:30.0px"><b class="t">B2_18_H</b><i class="k" style="top:11.9px">X</i><i class="v" style="top:11.9px">-0.2</i><i class="k" style="top:22.1px">Y</i><i class="v" style="top:22.1px">0.6</i><i class="k" style="top:32.3px">Z</i><i class="v" style="top:32.3px">0.2</i></div><div class="lb" style="left:449.8px;top:87.8px;width:30.0px"><b class="t">C_18_H</b><i class="k" style="top:11.9px">X</i><i class="v" style="top:11.9px">-0.4</i><i class="k" style="top:22.1px">Y</i><i class="v" style="top:22.1px">0.8</i><i class="k" style="top:32.3px">Z</i><i class="v" style="top:32.3px">0</i></div><div class="lb" style="left:497.0px;top:76.3px;width:31.4px"><b class="t">C2_18_H</b><i class="k" style="top:11.9px">X</i><i class="v" style="top:11.9px">3.1</i><i class="k" style="top:22.1px">Y</i><i class="v" style="top:22.1px">6</i><i class="k" style="top:32.3px">Z</i><i class="v" style="top:32.3px">0.6</i></div><div class="lb" style="left:473.0px;top:79.4px;width:31.0px"><b class="t">C1_18_H</b><i class="k" style="top:11.9px">X</i><i class="v" style="top:11.9px">0</i><i class="k" style="top:22.1px">Y</i><i class="v" style="top:22.1px">0.3</i><i class="k" style="top:32.3px">Z</i><i class="v" style="top:32.3px">0.1</i></div><div class="lb" style="left:541.6px;top:59.3px;width:30.0px"><b class="t">D_18_H</b><i class="k" style="top:11.9px">X</i><i class="v" style="top:11.9px">0.2</i><i class="k" style="top:22.1px">Y</i><i class="v" style="top:22.1px">0.5</i><i class="k" style="top:32.3px">Z</i><i class="v" style="top:32.3px">0.1</i></div><div class="lb" style="left:575.7px;top:56.3px;width:33.5px"><b class="t">D_17.1_H</b><i class="k" style="top:11.9px">X</i><i class="v" style="top:11.9px">0.4</i><i class="k" style="top:22.1px">Y</i><i class="v" style="top:22.1px">0.4</i><i class="k" style="top:32.3px">Z</i><i class="v" style="top:32.3px">0</i></div><div class="lb" style="left:613.5px;top:54.3px;width:30.2px"><b class="t">D_17_H</b><i class="k" style="top:11.9px">X</i><i class="v" style="top:11.9px">-0.5</i><i class="k" style="top:22.1px">Y</i><i class="v" style="top:22.1px">0.4</i><i class="k" style="top:32.3px">Z</i><i class="v" style="top:32.3px">0</i></div><div class="lb" style="left:647.3px;top:51.9px;width:33.4px"><b class="t">D_16.1_H</b><i class="k" style="top:11.9px">X</i><i class="v" style="top:11.9px">-0.2</i><i class="k" style="top:22.1px">Y</i><i class="v" style="top:22.1px">0.3</i><i class="k" style="top:32.3px">Z</i><i class="v" style="top:32.3px">0</i></div><div class="lb" style="left:679.7px;top:49.9px;width:29.7px"><b class="t">D_16_H</b><i class="k" style="top:11.9px">X</i><i class="v" style="top:11.9px">0</i><i class="k" style="top:22.1px">Y</i><i class="v" style="top:22.1px">0.3</i><i class="k" style="top:32.3px">Z</i><i class="v" style="top:32.3px">-0.1</i></div><div class="lb" style="left:705.0px;top:44.3px;width:32.2px"><b class="t">D_15.1_H</b><i class="k" style="top:11.9px">X</i><i class="v" style="top:11.9px">-0.4</i><i class="k" style="top:22.1px">Y</i><i class="v" style="top:22.1px">0.2</i><i class="k" style="top:32.3px">Z</i><i class="v" style="top:32.3px">0</i></div><div class="lb" style="left:736.6px;top:40.4px;width:30.0px"><b class="t">D_15_H</b><i class="k" style="top:11.9px">X</i><i class="v" style="top:11.9px">-0.3</i><i class="k" style="top:22.1px">Y</i><i class="v" style="top:22.1px">0.1</i><i class="k" style="top:32.3px">Z</i><i class="v" style="top:32.3px">-0.1</i></div><div class="lb" style="left:736.6px;top:82.6px;width:32.8px"><b class="t">D_14.1_H</b><i class="k" style="top:11.9px">X</i><i class="v" style="top:11.9px">-0.2</i><i class="k" style="top:22.1px">Y</i><i class="v" style="top:22.1px">0.1</i><i class="k" style="top:32.3px">Z</i><i class="v" style="top:32.3px">0</i></div><div class="lb" style="left:768.0px;top:80.6px;width:29.7px"><b class="t">D_14_H</b><i class="k" style="top:11.9px">X</i><i class="v" style="top:11.9px">-0.1</i><i class="k" style="top:22.1px">Y</i><i class="v" style="top:22.1px">0.1</i><i class="k" style="top:32.3px">Z</i><i class="v" style="top:32.3px">0</i></div><div class="lb" style="left:795.4px;top:78.7px;width:32.1px"><b class="t">D_13.1_H</b><i class="k" style="top:11.9px">X</i><i class="v" style="top:11.9px">-0.1</i><i class="k" style="top:22.1px">Y</i><i class="v" style="top:22.1px">0.1</i><i class="k" style="top:32.3px">Z</i><i class="v" style="top:32.3px">-0.2</i></div><div class="lb" style="left:843.3px;top:143.6px;width:30.4px"><b class="t">D_13_H</b><i class="k" style="top:11.9px">X</i><i class="v" style="top:11.9px">-0.2</i><i class="k" style="top:22.1px">Y</i><i class="v" style="top:22.1px">0.1</i><i class="k" style="top:32.3px">Z</i><i class="v" style="top:32.3px">-0.2</i></div><div class="lb" style="left:888.9px;top:171.6px;width:34.4px"><b class="t">D_12.1_H</b><i class="k" style="top:11.9px">X</i><i class="v" style="top:11.9px">-0.1</i><i class="k" style="top:22.1px">Y</i><i class="v" style="top:22.1px">0</i><i class="k" style="top:32.3px">Z</i><i class="v" style="top:32.3px">-0.2</i></div><div class="lb" style="left:180.6px;top:179.5px;width:26.4px"><b class="t">A_18_L</b><i class="k" style="top:11.9px">X</i><i class="v" style="top:11.9px">0.2</i><i class="k" style="top:22.1px">Y</i><i class="v" style="top:22.1px">0.4</i><i class="k" style="top:32.3px">Z</i><i class="v" style="top:32.3px">0</i></div><div class="lb" style="left:201.3px;top:271.3px;width:30.4px"><b class="t">A1_18_L</b><i class="k" style="top:11.9px">X</i><i class="v" style="top:11.9px">0.2</i><i class="k" style="top:22.1px">Y</i><i class="v" style="top:22.1px">0.6</i><i class="k" style="top:32.3px">Z</i><i class="v" style="top:32.3px">-0.1</i></div><div class="lb" style="left:265.0px;top:265.4px;width:29.8px"><b class="t">A3_18_L</b><i class="k" style="top:11.9px">X</i><i class="v" style="top:11.9px">0.1</i><i class="k" style="top:22.1px">Y</i><i class="v" style="top:22.1px">0.4</i><i class="k" style="top:32.3px">Z</i><i class="v" style="top:32.3px">-0.1</i></div><div class="lb" style="left:243.6px;top:267.2px;width:29.7px"><b class="t">A2_18_L</b><i class="k" style="top:11.9px">X</i><i class="v" style="top:11.9px">0.2</i><i class="k" style="top:22.1px">Y</i><i class="v" style="top:22.1px">0.5</i><i class="k" style="top:32.3px">Z</i><i class="v" style="top:32.3px">-0.1</i></div><div class="lb" style="left:297.1px;top:252.5px;width:30.2px"><b class="t">B_18_L</b><i class="k" style="top:11.9px">X</i><i class="v" style="top:11.9px">0.1</i><i class="k" style="top:22.1px">Y</i><i class="v" style="top:22.1px">0.5</i><i class="k" style="top:32.3px">Z</i><i class="v" style="top:32.3px">-0.2</i></div><div class="lb" style="left:299.1px;top:295.2px;width:26.8px"><b class="t">B_17_L</b><i class="k" style="top:11.9px">X</i><i class="v" style="top:11.9px">0.1</i><i class="k" style="top:22.1px">Y</i><i class="v" style="top:22.1px">0.3</i><i class="k" style="top:32.3px">Z</i><i class="v" style="top:32.3px">0</i></div><div class="lb" style="left:338.1px;top:296.4px;width:33.9px"><b class="t">B_16_ST1</b><i class="k" style="top:11.9px">X</i><i class="v" style="top:11.9px">0</i><i class="k" style="top:22.1px">Y</i><i class="v" style="top:22.1px">0.3</i><i class="k" style="top:32.3px">Z</i><i class="v" style="top:32.3px">0</i></div><div class="lb" style="left:371.2px;top:331.2px;width:27.6px"><b class="t">B_15_H</b><i class="k" style="top:11.9px">X</i><i class="v" style="top:11.9px">0.1</i><i class="k" style="top:22.1px">Y</i><i class="v" style="top:22.1px">0.1</i><i class="k" style="top:32.3px">Z</i><i class="v" style="top:32.3px">0</i></div><div class="lb" style="left:400.0px;top:355.8px;width:30.6px"><b class="t">B_14_H</b><i class="k" style="top:11.9px">X</i><i class="v" style="top:11.9px">0.1</i><i class="k" style="top:22.1px">Y</i><i class="v" style="top:22.1px">0.1</i><i class="k" style="top:32.3px">Z</i><i class="v" style="top:32.3px">-0.1</i></div><div class="lb" style="left:388.8px;top:156.9px;width:29.8px"><b class="t">B1_18_L</b><i class="k" style="top:11.9px">X</i><i class="v" style="top:11.9px">0</i><i class="k" style="top:22.1px">Y</i><i class="v" style="top:22.1px">0.3</i><i class="k" style="top:32.3px">Z</i><i class="v" style="top:32.3px">-0.1</i></div><div class="lb" style="left:425.6px;top:144.0px;width:30.1px"><b class="t">B2_18_L</b><i class="k" style="top:11.9px">X</i><i class="v" style="top:11.9px">-0.1</i><i class="k" style="top:22.1px">Y</i><i class="v" style="top:22.1px">0.4</i><i class="k" style="top:32.3px">Z</i><i class="v" style="top:32.3px">0</i></div><div class="lb" style="left:498.0px;top:148.3px;width:29.7px"><b class="t">C_17_H</b><i class="k" style="top:11.9px">X</i><i class="v" style="top:11.9px">-0.2</i><i class="k" style="top:22.1px">Y</i><i class="v" style="top:22.1px">0.7</i><i class="k" style="top:32.3px">Z</i><i class="v" style="top:32.3px">0.1</i></div><div class="lb" style="left:538.9px;top:128.3px;width:29.8px"><b class="t">D_18_L</b><i class="k" style="top:11.9px">X</i><i class="v" style="top:11.9px">0.1</i><i class="k" style="top:22.1px">Y</i><i class="v" style="top:22.1px">0.4</i><i class="k" style="top:32.3px">Z</i><i class="v" style="top:32.3px">0.2</i></div><div class="lb" style="left:522.0px;top:137.9px;width:30.4px"><b class="t">C2_18_L</b><i class="k" style="top:11.9px">X</i><i class="v" style="top:11.9px">0</i><i class="k" style="top:22.1px">Y</i><i class="v" style="top:22.1px">0.3</i><i class="k" style="top:32.3px">Z</i><i class="v" style="top:32.3px">-0.1</i></div><div class="lb" style="left:419.8px;top:226.4px;width:26.8px"><b class="t">C_18_L</b><i class="k" style="top:11.9px">X</i><i class="v" style="top:11.9px">0</i><i class="k" style="top:22.1px">Y</i><i class="v" style="top:22.1px">0.3</i><i class="k" style="top:32.3px">Z</i><i class="v" style="top:32.3px">0.1</i></div><div class="lb" style="left:449.6px;top:268.0px;width:29.8px"><b class="t">C_17_L</b><i class="k" style="top:11.9px">X</i><i class="v" style="top:11.9px">-0.1</i><i class="k" style="top:22.1px">Y</i><i class="v" style="top:22.1px">0.4</i><i class="k" style="top:32.3px">Z</i><i class="v" style="top:32.3px">0.1</i></div><div class="lb" style="left:520.4px;top:219.8px;width:29.8px"><b class="t">C_16_H</b><i class="k" style="top:11.9px">X</i><i class="v" style="top:11.9px">-0.4</i><i class="k" style="top:22.1px">Y</i><i class="v" style="top:22.1px">0.4</i><i class="k" style="top:32.3px">Z</i><i class="v" style="top:32.3px">0</i></div><div class="lb" style="left:481.5px;top:292.3px;width:31.0px"><b class="t">C1_18_L</b><i class="k" style="top:11.9px">X</i><i class="v" style="top:11.9px">0</i><i class="k" style="top:22.1px">Y</i><i class="v" style="top:22.1px">0.4</i><i class="k" style="top:32.3px">Z</i><i class="v" style="top:32.3px">0</i></div><div class="lb" style="left:507.0px;top:299.3px;width:26.7px"><b class="t">C_16_L</b><i class="k" style="top:11.9px">X</i><i class="v" style="top:11.9px">0.1</i><i class="k" style="top:22.1px">Y</i><i class="v" style="top:22.1px">0.2</i><i class="k" style="top:32.3px">Z</i><i class="v" style="top:32.3px">0</i></div><div class="lb" style="left:547.3px;top:203.3px;width:31.8px"><b class="t">D_17.1_L</b><i class="k" style="top:11.9px">X</i><i class="v" style="top:11.9px">0.1</i><i class="k" style="top:22.1px">Y</i><i class="v" style="top:22.1px">0.2</i><i class="k" style="top:32.3px">Z</i><i class="v" style="top:32.3px">0</i></div><div class="lb" style="left:565.4px;top:243.6px;width:30.2px"><b class="t">C_15_H</b><i class="k" style="top:11.9px">X</i><i class="v" style="top:11.9px">-0.1</i><i class="k" style="top:22.1px">Y</i><i class="v" style="top:22.1px">0.2</i><i class="k" style="top:32.3px">Z</i><i class="v" style="top:32.3px">0</i></div><div class="lb" style="left:616.0px;top:270.0px;width:28.7px"><b class="t"></b><i class="k" style="top:11.9px">X</i><i class="v" style="top:11.9px">0.2</i><i class="k" style="top:22.1px">Y</i><i class="v" style="top:22.1px">0.2</i><i class="k" style="top:32.3px">Z</i><i class="v" style="top:32.3px">0</i></div><div class="lb" style="left:609.4px;top:235.7px;width:30.2px"><b class="t">D_17_L</b><i class="k" style="top:11.9px">X</i><i class="v" style="top:11.9px">0</i><i class="k" style="top:22.1px">Y</i><i class="v" style="top:22.1px">0.2</i><i class="k" style="top:32.3px">Z</i><i class="v" style="top:32.3px">-0.1</i></div><div class="lb" style="left:638.2px;top:258.1px;width:31.2px"><b class="t">D_16.1_L</b><i class="k" style="top:11.9px">X</i><i class="v" style="top:11.9px">0.1</i><i class="k" style="top:22.1px">Y</i><i class="v" style="top:22.1px">0.2</i><i class="k" style="top:32.3px">Z</i><i class="v" style="top:32.3px">0</i></div><div class="lb" style="left:685.7px;top:306.3px;width:30.8px"><b class="t">D_16_L</b><i class="k" style="top:11.9px">X</i><i class="v" style="top:11.9px">0</i><i class="k" style="top:22.1px">Y</i><i class="v" style="top:22.1px">1.1</i><i class="k" style="top:32.3px">Z</i><i class="v" style="top:32.3px">-0.6</i></div><div class="lb" style="left:727.0px;top:310.3px;width:33.3px"><b class="t">D_15.1_L</b><i class="k" style="top:11.9px">X</i><i class="v" style="top:11.9px">0</i><i class="k" style="top:22.1px">Y</i><i class="v" style="top:22.1px">0</i><i class="k" style="top:32.3px">Z</i><i class="v" style="top:32.3px">0</i></div><div class="lb" style="left:737.1px;top:233.7px;width:27.0px"><b class="t">D_15_L</b><i class="k" style="top:11.9px">X</i><i class="v" style="top:11.9px">0</i><i class="k" style="top:22.1px">Y</i><i class="v" style="top:22.1px">0</i><i class="k" style="top:32.3px">Z</i><i class="v" style="top:32.3px">0</i></div></div>
<svg width="1024" height="504" style="position:absolute;left:0;top:0"><circle cx="166.8" cy="184" r="3.8" fill="#70c890" stroke="#55ad74" stroke-width="0.7"/><circle cx="162.9" cy="195.9" r="3.8" fill="#70c890" stroke="#55ad74" stroke-width="0.7"/><circle cx="162.9" cy="207.5" r="3.8" fill="#70c890" stroke="#55ad74" stroke-width="0.7"/><circle cx="163.2" cy="220.9" r="3.8" fill="#70c890" stroke="#55ad74" stroke-width="0.7"/><circle cx="163.2" cy="237.5" r="3.8" fill="#70c890" stroke="#55ad74" stroke-width="0.7"/><circle cx="211" cy="181.3" r="3.8" fill="#70c890" stroke="#55ad74" stroke-width="0.7"/><circle cx="257.4" cy="177.9" r="3.8" fill="#70c890" stroke="#55ad74" stroke-width="0.7"/><circle cx="300.7" cy="174" r="3.8" fill="#70c890" stroke="#55ad74" stroke-width="0.7"/><circle cx="340.7" cy="167.9" r="3.8" fill="#70c890" stroke="#55ad74" stroke-width="0.7"/><circle cx="379.1" cy="165.3" r="3.8" fill="#70c890" stroke="#55ad74" stroke-width="0.7"/><circle cx="360.6" cy="199.8" r="3.8" fill="#70c890" stroke="#55ad74" stroke-width="0.7"/><circle cx="416.9" cy="162.4" r="3.8" fill="#70c890" stroke="#55ad74" stroke-width="0.7"/><circle cx="451.5" cy="156.8" r="3.8" fill="#70c890" stroke="#55ad74" stroke-width="0.7"/><circle cx="486.3" cy="153.4" r="3.8" fill="#70c890" stroke="#55ad74" stroke-width="0.7"/><circle cx="478.5" cy="180" r="3.8" fill="#70c890" stroke="#55ad74" stroke-width="0.7"/><circle cx="513.4" cy="153.4" r="3.8" fill="#70c890" stroke="#55ad74" stroke-width="0.7"/><circle cx="511" cy="196" r="3.8" fill="#70c890" stroke="#55ad74" stroke-width="0.7"/><circle cx="575.3" cy="151" r="3.8" fill="#70c890" stroke="#55ad74" stroke-width="0.7"/><circle cx="592" cy="154.2" r="3.8" fill="#70c890" stroke="#55ad74" stroke-width="0.7"/><circle cx="610.4" cy="159.4" r="3.8" fill="#70c890" stroke="#55ad74" stroke-width="0.7"/><circle cx="630.6" cy="165.4" r="3.8" fill="#70c890" stroke="#55ad74" stroke-width="0.7"/><circle cx="652" cy="174.1" r="3.8" fill="#70c890" stroke="#55ad74" stroke-width="0.7"/><circle cx="675.9" cy="185.2" r="3.8" fill="#70c890" stroke="#55ad74" stroke-width="0.7"/><circle cx="700.9" cy="194" r="3.8" fill="#70c890" stroke="#55ad74" stroke-width="0.7"/><circle cx="731.4" cy="207" r="3.8" fill="#70c890" stroke="#55ad74" stroke-width="0.7"/><circle cx="763.4" cy="219.8" r="3.8" fill="#70c890" stroke="#55ad74" stroke-width="0.7"/><circle cx="799.5" cy="236.4" r="3.8" fill="#70c890" stroke="#55ad74" stroke-width="0.7"/><circle cx="841" cy="253.2" r="3.8" fill="#70c890" stroke="#55ad74" stroke-width="0.7"/><circle cx="887.2" cy="272.4" r="3.8" fill="#70c890" stroke="#55ad74" stroke-width="0.7"/><circle cx="410.8" cy="264.2" r="3.8" fill="#70c890" stroke="#55ad74" stroke-width="0.7"/><circle cx="445.9" cy="297.8" r="3.8" fill="#70c890" stroke="#55ad74" stroke-width="0.7"/><circle cx="550" cy="234" r="3.8" fill="#70c890" stroke="#55ad74" stroke-width="0.7"/><circle cx="601.5" cy="261" r="3.8" fill="#70c890" stroke="#55ad74" stroke-width="0.7"/><circle cx="387.6" cy="249.6" r="3.8" fill="#f08a30" stroke="#c06010" stroke-width="0.6"/><path d="M160.7,119 L171.8,110 L172,115.6 C180,115 186.5,118.5 188.3,124.5 C189.2,128 188.8,131.5 187.6,133.8 C186,128.5 181,123.8 172.2,123.5 L171.2,128.8 Z" fill="#f5a028"/></svg>
<div style="position:absolute;left:0;top:49px;width:1024px;height:14px;background:linear-gradient(180deg,rgba(85,135,170,.55),rgba(140,180,205,.25) 50%,rgba(200,215,225,0))"></div>
<div style="position:absolute;left:514.7px;top:61.3px;width:74.7px;height:17.3px;background:rgba(70,138,185,.82);border-radius:3px"></div>
<div style="position:absolute;left:518px;top:63.8px;font-size:10.7px;font-weight:bold;color:#fff;white-space:nowrap">Widok z boku</div>
<div id="side"><div style="position:absolute;left:4.6px;top:178.0px;width:32.4px;height:39.4px;background:rgba(18,24,32,.2)"></div><div style="position:absolute;left:39.5px;top:192.0px;width:14.5px;height:39.5px;background:rgba(18,24,32,.2)"></div><div style="position:absolute;left:4.6px;top:248.0px;width:29.2px;height:30.5px;background:rgba(18,24,32,.2)"></div><div style="position:absolute;left:4.6px;top:283.0px;width:32.4px;height:46.0px;background:rgba(18,24,32,.2)"></div><div style="position:absolute;left:42.6px;top:291.0px;width:11.4px;height:40.0px;background:rgba(18,24,32,.2)"></div><div style="position:absolute;left:15.0px;top:333.0px;width:28.5px;height:39.0px;background:rgba(18,24,32,.2)"></div><svg width="54" height="449" style="position:absolute;left:0;top:0"><g fill="none" stroke="#d8dde3" stroke-width="1.1"><circle cx="26" cy="66" r="6.5"/><path d="M22,62 q3,2 1,4 q-2,2 1,4 M29,61 q-2,3 1,4 q2,1 0,4"/><rect x="19.5" y="101" width="13" height="12"/><circle cx="26" cy="104.5" r="1.5"/><path d="M20,112 l4,-4 l2.5,2 l2,-1.5 l3,3.5"/><rect x="20.5" y="142" width="11" height="13" rx="1"/><rect x="23.5" y="140.5" width="5" height="3"/><path d="M23,147 h6 M23,150 h6 M23,153 h4"/><path d="M19.5,186 q6.5,-6 13,0 M21.5,188.5 q4.5,-4 9,0 M23.5,191 q2.5,-2 5,0"/><circle cx="26" cy="193.5" r="1" fill="#d8dde3"/><rect x="20.5" y="229" width="3" height="5" rx="1"/><rect x="24.5" y="223" width="3" height="11" rx="1"/><rect x="28.5" y="226" width="3" height="8" rx="1"/><circle cx="26" cy="271" r="5.5"/><path d="M26,268 V271 H28.5 M20,265 q1,-3 4,-2.5 M32,265 q-1,-3 -4,-2.5 M22,276 l-1.5,2 M30,276 l1.5,2"/><ellipse cx="25" cy="309" rx="6" ry="4.5"/><path d="M21,312.5 l-1.5,3 l4,-2"/><path d="M21,355 q-4,0 -3.5,-4 q0.5,-3 3.5,-3 q1,-4 5,-4 q4,0 5,4 q3,0 3.5,3 q0.5,4 -3.5,4 z"/><path d="M26,357 V350 M23.5,352.5 L26,350 L28.5,352.5"/><path d="M32,395 A6.5,6.5 0 1,1 31.5,388 Q33,391 30.5,392 Q29,393.5 32,395 Z"/><circle cx="29" cy="389.5" r="1.3"/><circle cx="22.5" cy="391" r="1"/><circle cx="24" cy="394.5" r="1"/><circle cx="27" cy="396" r="1"/><path d="M22.5,428 V426 H32.5 V438 H30.5"/><rect x="20.5" y="428" width="10" height="12"/><path d="M22.5,431 h6 M22.5,434 h6 M22.5,437 h3"/></g></svg><div style="position:absolute;left:0;top:15px;width:54px;text-align:center;color:#fff;font-weight:bold;font-size:10px">QV</div><div style="position:absolute;left:10px;top:36px;width:34px;height:1.5px;background:#8d96a2"></div></div><svg width="12" height="6" style="position:absolute;left:32px;top:50px"><path d="M0,6 L6,0.5 L12,6z" fill="#474d5b"/></svg>
<div style="position:absolute;left:989.5px;top:56px;width:40px;height:20.5px;background:#4f7c9b;border-radius:4px"></div><svg width="40" height="22" style="position:absolute;left:989.5px;top:56px"><g fill="none" stroke="#e6eef4" stroke-width="1.1">
<path d="M4,13 q-1,-3 1,-5 q3,-3 7,-1 q3,2 1,5.5 q-2,2 -6,1.5 l-3,2 z"/><path d="M12,7.5 q3,0.5 3,3.5 q0,2 -1.5,3 l0.5,2 l-2.5,-1.5"/>
<path d="M21,8.5 l4.5,4.5 l4.5,-4.5" stroke-width="1.3"/></g></svg><div style="position:absolute;left:947.5px;top:81.5px;width:80px;height:80.5px;background:linear-gradient(180deg,rgba(62,85,105,.78),rgba(45,105,145,.75));border-radius:3px"></div><div style="position:absolute;left:953px;top:87.5px;width:11.5px;height:11.5px;background:#3b4654;border-radius:1.5px"></div><svg width="12" height="12" style="position:absolute;left:953px;top:87.5px"><path d="M3,6 l2,2.2 l4,-4.5" fill="none" stroke="#fff" stroke-width="1.3"/></svg><div style="position:absolute;left:969.5px;top:88px;font-size:7.6px;color:#fff;white-space:nowrap;font-weight:bold;transform:scaleX(.88);transform-origin:0 0">Labels</div><div style="position:absolute;left:953px;top:106.5px;width:11.5px;height:11.5px;background:#3b4654;border-radius:1.5px"></div><svg width="12" height="12" style="position:absolute;left:953px;top:106.5px"><path d="M3,6 l2,2.2 l4,-4.5" fill="none" stroke="#fff" stroke-width="1.3"/></svg><div style="position:absolute;left:969.5px;top:107px;font-size:7.6px;color:#fff;white-space:nowrap;font-weight:bold;transform:scaleX(.88);transform-origin:0 0">Label Values</div><div style="position:absolute;left:953px;top:125.0px;width:11.5px;height:11.5px;background:#3b4654;border-radius:1.5px"></div><svg width="12" height="12" style="position:absolute;left:953px;top:125.0px"><path d="M3,6 l2,2.2 l4,-4.5" fill="none" stroke="#fff" stroke-width="1.3"/></svg><div style="position:absolute;left:969.5px;top:125.5px;font-size:7.6px;color:#fff;white-space:nowrap;font-weight:bold;transform:scaleX(.88);transform-origin:0 0">Inactive Sensors</div><div style="position:absolute;left:953px;top:144.0px;width:11.5px;height:11.5px;background:#3b4654;border-radius:1.5px"></div><svg width="12" height="12" style="position:absolute;left:953px;top:144.0px"><path d="M3,6 l2,2.2 l4,-4.5" fill="none" stroke="#fff" stroke-width="1.3"/></svg><div style="position:absolute;left:969.5px;top:144.5px;font-size:7.6px;color:#fff;white-space:nowrap;font-weight:bold;transform:scaleX(.88);transform-origin:0 0">Pryzmat</div>
<div style="position:absolute;left:700px;top:38px;width:80px;height:10.5px;background:rgba(255,255,255,.47)"></div>
</div></body></html>
